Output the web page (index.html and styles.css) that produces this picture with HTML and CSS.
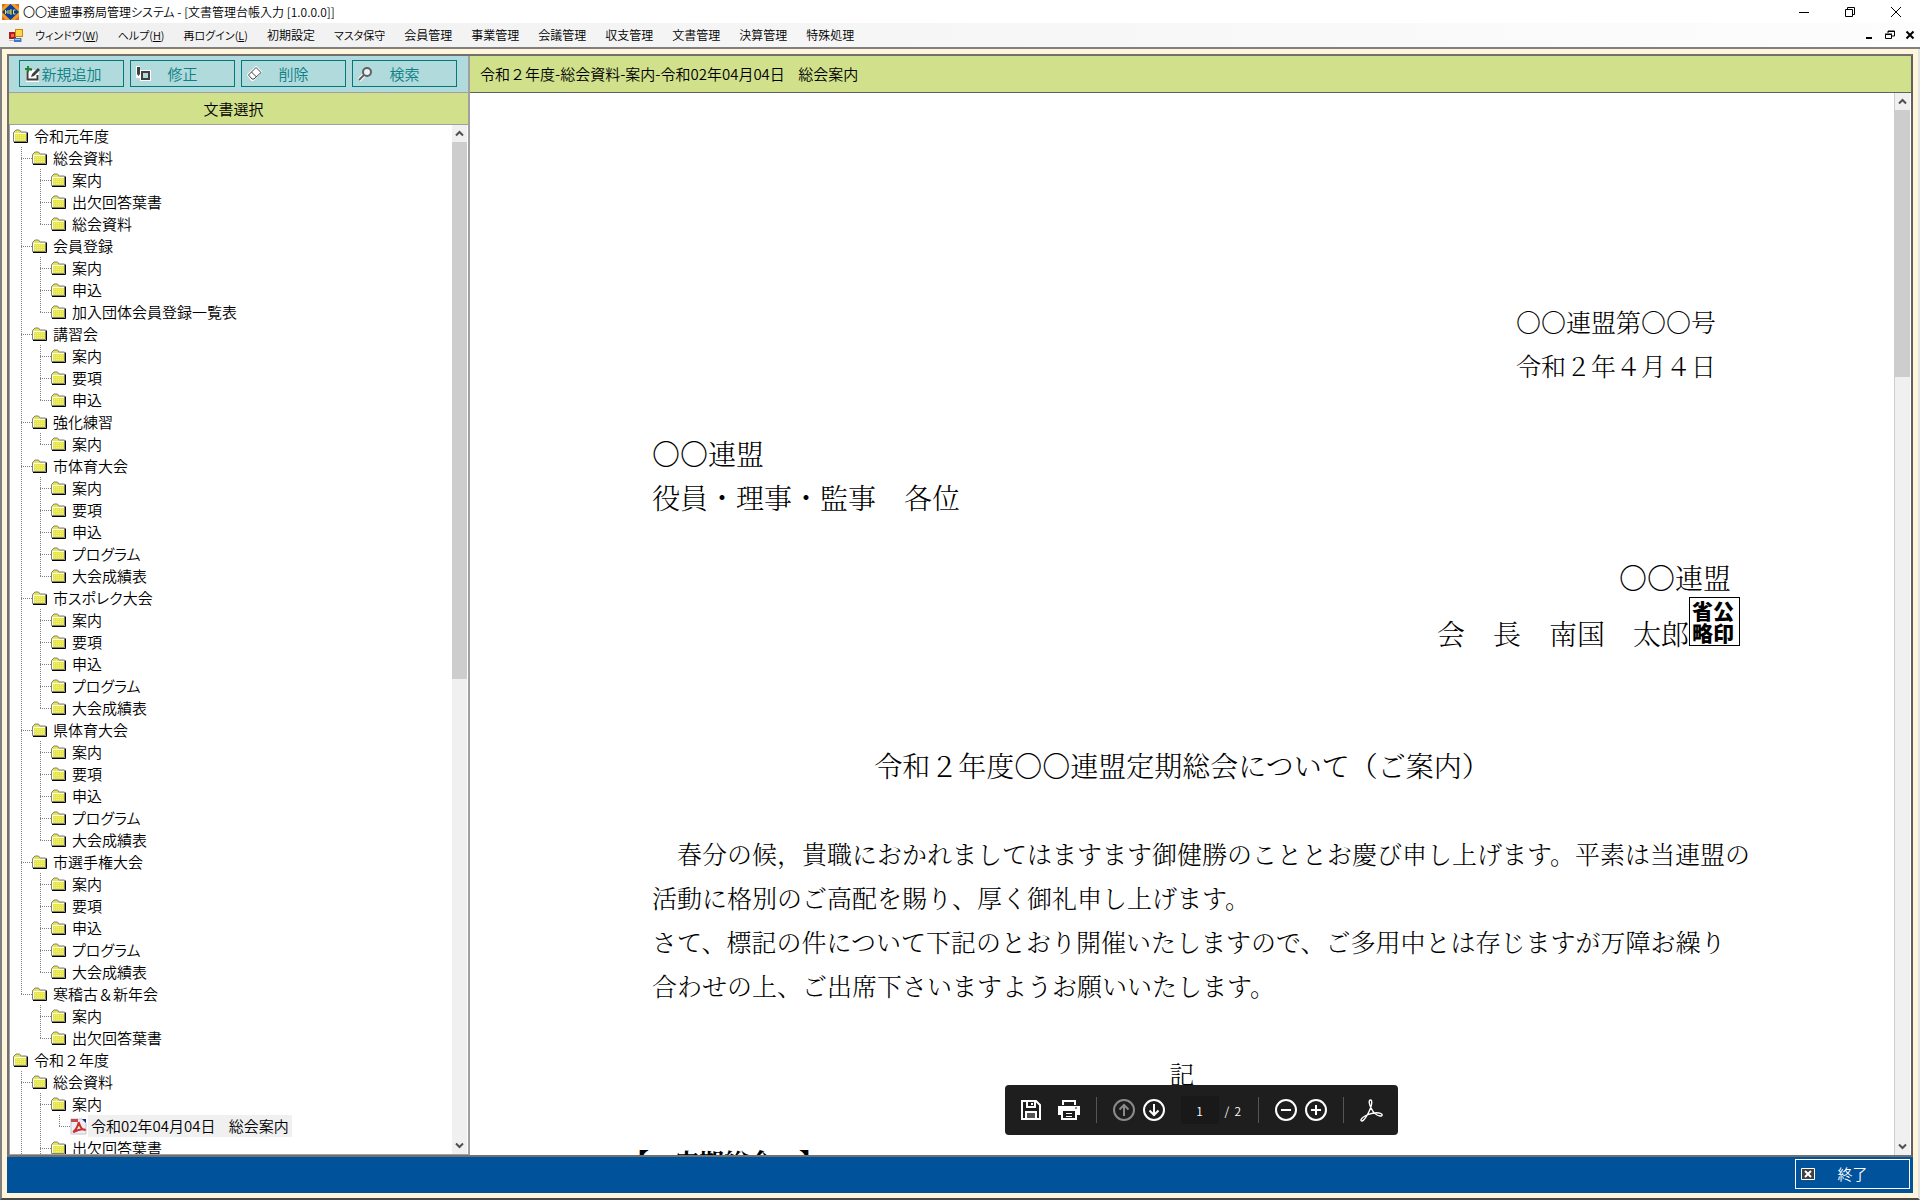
FILE: index.html
```html
<!DOCTYPE html>
<html lang="ja">
<head>
  <meta charset="UTF-8">
  <title>〇〇連盟事務局管理システム</title>
  <link rel="stylesheet" href="styles.css">
</head>
<body>

<!-- shared icons -->
<svg class="defs" aria-hidden="true">
  <symbol id="folder" viewBox="0 0 15 14">
    <path d="M0.5 12.5V3.5L2 2L3 1H6.5L8 3H13.5V12.5z" fill="#e6e645" stroke="#808080"/>
    <path d="M1.5 12V4.5H13" fill="none" stroke="#fff"/>
    <path d="M3 6.5h10M3 8.5h10M3 10.5h10" stroke="#fff" stroke-opacity=".4" stroke-dasharray="1 1"/>
    <path d="M1 13.5H14.5V3.5" fill="none" stroke="#000"/>
  </symbol>
  <symbol id="pdf" viewBox="0 0 17 17">
    <path d="M1 1h11l4 4v11H1z" fill="#eeedf4" stroke="#c5c3d4"/>
    <path d="M12 1h4v4z" fill="#1c2aa0"/>
    <path d="M1 1h7v3H1z" fill="#c84a48"/>
    <path d="M3 14c2-1 6-7 5.500-10c2 5 3 8 7 8c-4-2-8 0-12 2" fill="none" stroke="#c9302c" stroke-width="2"/>
  </symbol>
  <symbol id="up" viewBox="0 0 15 16">
    <path d="M4 10L7.500 6.500L11 10" fill="none" stroke="#505050" stroke-width="2"/>
  </symbol>
  <symbol id="down" viewBox="0 0 15 16">
    <path d="M4 6L7.500 9.500L11 6" fill="none" stroke="#505050" stroke-width="2"/>
  </symbol>
</svg>

<header class="titlebar">
  <svg class="app-icon" width="17" height="16" viewBox="0 0 17 16">
    <path d="M0 0h17v16H0z" fill="#f0a028"/>
    <path d="M0 0h4L0 4zM17 0v4L13 0zM0 16v-4l4 4zM17 16h-4l4-4z" fill="#e06b1a"/>
    <path d="M8.500 0L17 8L8.500 16L0 8z" fill="#0a3da8"/>
    <path d="M3.500 6v4M3.500 8h2M6 6v4M10 6H8v4h2M8 8h2M13.500 6h-2v4h2" fill="none" stroke="#f2e62e"/>
  </svg>
  <h1 class="kana">〇〇連盟事務局管理システム - [文書管理台帳入力 [1.0.0.0]]</h1>
  <div class="window-buttons">
    <button aria-label="最小化"><svg width="12" height="12" viewBox="0 0 12 12"><path d="M1 6.500h10" stroke="#000"/></svg></button>
    <button aria-label="元に戻す"><svg width="12" height="12" viewBox="0 0 12 12"><path d="M1.500 3.500h7v7h-7zM3.500 3V1.500h7v7H9" fill="none" stroke="#000"/></svg></button>
    <button aria-label="閉じる"><svg width="12" height="12" viewBox="0 0 12 12"><path d="M1 1l10 10M11 1L1 11" stroke="#000"/></svg></button>
  </div>
</header>

<nav class="menubar">
  <svg class="form-icon" width="14" height="15" viewBox="0 0 14 15">
    <path d="M0 4h7v7H0z" fill="#b01c1c"/><path d="M2 6h3v3H2z" fill="#e86a5a"/>
    <path d="M6 1h8v8H6z" fill="#c98a00"/><path d="M7 2h6v6H7z" fill="#ffd34a"/>
    <path d="M5 10h7v4H5z" fill="#3c78c8"/><path d="M6 11h5v1H6z" fill="#a8ccf5"/>
    <path d="M0 12.500h5M12.500 10v4" stroke="#bbb"/>
  </svg>
  <a class="kana" href="#">ウィンドウ(<u>W</u>)</a>
  <a class="kana" href="#">ヘルプ(<u>H</u>)</a>
  <a class="kana" href="#">再ログイン(<u>L</u>)</a>
  <a href="#">初期設定</a>
  <a class="kana" href="#">マスタ保守</a>
  <a href="#">会員管理</a>
  <a href="#">事業管理</a>
  <a href="#">会議管理</a>
  <a href="#">収支管理</a>
  <a href="#">文書管理</a>
  <a href="#">決算管理</a>
  <a href="#">特殊処理</a>
  <div class="mdi-buttons">
    <button aria-label="子ウィンドウを最小化"><svg width="10" height="10" viewBox="0 0 10 10"><path d="M1 8h6" stroke="#000" stroke-width="2"/></svg></button>
    <button aria-label="子ウィンドウを元に戻す"><svg width="10" height="10" viewBox="0 0 10 10"><path d="M0.500 4.500h6v4h-6zM0 4h7M3 3V1h6.500v5H7M3 1.500h6" fill="none" stroke="#000"/></svg></button>
    <button aria-label="子ウィンドウを閉じる"><svg width="10" height="10" viewBox="0 0 10 10"><path d="M1.500 1.500l7 7M8.500 1.500l-7 7" stroke="#000" stroke-width="2"/></svg></button>
  </div>
</nav>

<main class="workspace">
  <div class="frame">

    <!-- Left: toolbar and document tree -->
    <section class="sidebar">
      <div class="toolbar">
        <button class="tool">
          <svg width="16" height="16" viewBox="0 0 16 16">
            <path d="M2 5h11v10H2z" fill="#fff" stroke="#fff" stroke-width="2"/>
            <path d="M7 3.500H2.500v10h10V9" fill="none" stroke="#404040" stroke-width="2"/>
            <path d="M6 11l1-3l6-6l2 2l-6 6z" fill="#404040"/>
            <path d="M3 0v6M0 3h6" stroke="#1a8a2e" stroke-width="2"/>
          </svg>
          <span>新規追加</span>
        </button>
        <button class="tool">
          <svg width="16" height="16" viewBox="0 0 16 16">
            <path d="M0 0h4v4h11v11H4v-3H0z" fill="#fff"/>
            <path d="M6 6h7v7H6z" fill="#b0dadc" stroke="#404040" stroke-width="2"/>
            <path d="M1 1h3v7l-1.500 2L1 8zM0 3h1" fill="#404040"/>
          </svg>
          <span>修正</span>
        </button>
        <button class="tool">
          <svg width="16" height="16" viewBox="0 0 16 16">
            <path d="M1 9l8-8l5 5l-8 8H5z" fill="#fff" stroke="#fff" stroke-width="2"/>
            <path d="M1.500 9L9 1.500l5 5L7 13H5zM4.500 6l5 5" fill="#fff" stroke="#404040"/>
          </svg>
          <span>削除</span>
        </button>
        <button class="tool">
          <svg width="16" height="16" viewBox="0 0 16 16">
            <path d="M1 14l6-6" stroke="#fff" stroke-width="4"/>
            <circle cx="9" cy="6" r="4" fill="#e8f4f5" stroke="#606060" stroke-width="2"/>
            <path d="M6 9l-5 5" stroke="#606060" stroke-width="2"/>
          </svg>
          <span>検索</span>
        </button>
      </div>
      <h2 class="side-title">文書選択</h2>
      <div class="tree-box">
        <ul class="tree">
          <li><span class="row"><svg><use href="#folder"/></svg><span>令和元年度</span></span>
            <ul>
              <li><span class="row"><svg><use href="#folder"/></svg><span>総会資料</span></span>
                <ul>
                  <li><span class="row"><svg><use href="#folder"/></svg><span>案内</span></span></li>
                  <li><span class="row"><svg><use href="#folder"/></svg><span>出欠回答葉書</span></span></li>
                  <li><span class="row"><svg><use href="#folder"/></svg><span>総会資料</span></span></li>
                </ul>
              </li>
              <li><span class="row"><svg><use href="#folder"/></svg><span>会員登録</span></span>
                <ul>
                  <li><span class="row"><svg><use href="#folder"/></svg><span>案内</span></span></li>
                  <li><span class="row"><svg><use href="#folder"/></svg><span>申込</span></span></li>
                  <li><span class="row"><svg><use href="#folder"/></svg><span>加入団体会員登録一覧表</span></span></li>
                </ul>
              </li>
              <li><span class="row"><svg><use href="#folder"/></svg><span>講習会</span></span>
                <ul>
                  <li><span class="row"><svg><use href="#folder"/></svg><span>案内</span></span></li>
                  <li><span class="row"><svg><use href="#folder"/></svg><span>要項</span></span></li>
                  <li><span class="row"><svg><use href="#folder"/></svg><span>申込</span></span></li>
                </ul>
              </li>
              <li><span class="row"><svg><use href="#folder"/></svg><span>強化練習</span></span>
                <ul>
                  <li><span class="row"><svg><use href="#folder"/></svg><span>案内</span></span></li>
                </ul>
              </li>
              <li><span class="row"><svg><use href="#folder"/></svg><span>市体育大会</span></span>
                <ul>
                  <li><span class="row"><svg><use href="#folder"/></svg><span>案内</span></span></li>
                  <li><span class="row"><svg><use href="#folder"/></svg><span>要項</span></span></li>
                  <li><span class="row"><svg><use href="#folder"/></svg><span>申込</span></span></li>
                  <li><span class="row"><svg><use href="#folder"/></svg><span class="kana">プログラム</span></span></li>
                  <li><span class="row"><svg><use href="#folder"/></svg><span>大会成績表</span></span></li>
                </ul>
              </li>
              <li><span class="row"><svg><use href="#folder"/></svg><span class="kana">市スポレク大会</span></span>
                <ul>
                  <li><span class="row"><svg><use href="#folder"/></svg><span>案内</span></span></li>
                  <li><span class="row"><svg><use href="#folder"/></svg><span>要項</span></span></li>
                  <li><span class="row"><svg><use href="#folder"/></svg><span>申込</span></span></li>
                  <li><span class="row"><svg><use href="#folder"/></svg><span class="kana">プログラム</span></span></li>
                  <li><span class="row"><svg><use href="#folder"/></svg><span>大会成績表</span></span></li>
                </ul>
              </li>
              <li><span class="row"><svg><use href="#folder"/></svg><span>県体育大会</span></span>
                <ul>
                  <li><span class="row"><svg><use href="#folder"/></svg><span>案内</span></span></li>
                  <li><span class="row"><svg><use href="#folder"/></svg><span>要項</span></span></li>
                  <li><span class="row"><svg><use href="#folder"/></svg><span>申込</span></span></li>
                  <li><span class="row"><svg><use href="#folder"/></svg><span class="kana">プログラム</span></span></li>
                  <li><span class="row"><svg><use href="#folder"/></svg><span>大会成績表</span></span></li>
                </ul>
              </li>
              <li><span class="row"><svg><use href="#folder"/></svg><span>市選手権大会</span></span>
                <ul>
                  <li><span class="row"><svg><use href="#folder"/></svg><span>案内</span></span></li>
                  <li><span class="row"><svg><use href="#folder"/></svg><span>要項</span></span></li>
                  <li><span class="row"><svg><use href="#folder"/></svg><span>申込</span></span></li>
                  <li><span class="row"><svg><use href="#folder"/></svg><span class="kana">プログラム</span></span></li>
                  <li><span class="row"><svg><use href="#folder"/></svg><span>大会成績表</span></span></li>
                </ul>
              </li>
              <li><span class="row"><svg><use href="#folder"/></svg><span>寒稽古＆新年会</span></span>
                <ul>
                  <li><span class="row"><svg><use href="#folder"/></svg><span>案内</span></span></li>
                  <li><span class="row"><svg><use href="#folder"/></svg><span>出欠回答葉書</span></span></li>
                </ul>
              </li>
            </ul>
          </li>
          <li><span class="row"><svg><use href="#folder"/></svg><span>令和２年度</span></span>
            <ul>
              <li class="more"><span class="row"><svg><use href="#folder"/></svg><span>総会資料</span></span>
                <ul>
                  <li><span class="row"><svg><use href="#folder"/></svg><span>案内</span></span>
                    <ul>
                      <li><span class="row selected"><svg class="pdf"><use href="#pdf"/></svg><span>令和02年04月04日&nbsp;&nbsp;&nbsp; 総会案内</span></span></li>
                    </ul>
                  </li>
                  <li class="more"><span class="row"><svg><use href="#folder"/></svg><span>出欠回答葉書</span></span></li>
                </ul>
              </li>
            </ul>
          </li>
        </ul>
        <div class="scrollbar">
          <svg><use href="#up"/></svg>
          <div class="track"><div class="thumb tree-thumb"></div></div>
          <svg><use href="#down"/></svg>
        </div>
      </div>
    </section>

    <!-- Right: PDF preview -->
    <section class="viewer">
      <h2 class="doc-path">令和２年度-総会資料-案内-令和02年04月04日&nbsp;&nbsp;&nbsp; 総会案内</h2>
      <div class="doc-pane">
        <div class="doc-scroll">
          <article class="page">
            <p class="number">〇〇連盟第〇〇号<br>令和２年４月４日</p>
            <p class="address">〇〇連盟<br>役員・理事・監事　各位</p>
            <p class="sender">〇〇連盟</p>
            <p class="chairman">会　長　南国　太郎<span class="seal">省公<br>略印</span></p>
            <h3>令和２年度〇〇連盟定期総会について（ご案内）</h3>
            <p class="body-text">　春分の候，貴職におかれましてはますます御健勝のこととお慶び申し上げます。平素は当連盟の<br>活動に格別のご高配を賜り、厚く御礼申し上げます。<br>さて、標記の件について下記のとおり開催いたしますので、ご多用中とは存じますが万障お繰り<br>合わせの上、ご出席下さいますようお願いいたします。</p>
            <p class="ki">記</p>
            <p class="section">【　定期総会　】</p>
          </article>
        </div>
        <div class="scrollbar doc-bar">
          <svg><use href="#up"/></svg>
          <div class="track"><div class="thumb doc-thumb"></div></div>
          <svg><use href="#down"/></svg>
        </div>

        <div class="pdf-tools">
          <button aria-label="保存">
            <svg width="22" height="22" viewBox="0 0 22 22" fill="none" stroke="#fff" stroke-width="2">
              <path d="M2 2h14l4 4v14H2z"/><path d="M7 2v6h8V2M12 4v2"/><path d="M6 20v-7h10v7z" fill="#555"/>
            </svg>
          </button>
          <button aria-label="印刷">
            <svg width="22" height="22" viewBox="0 0 22 22">
              <path d="M4 1h14v5H4zM0 7h22v9h-3v5H3v-5H0z" fill="#fff"/>
              <path d="M6 3h10v3H6zM5 12h12v7H5z" fill="#1e1e1e"/>
              <path d="M8 14.500h6M8 17.500h6" stroke="#fff"/><path d="M17 9h2" stroke="#1e1e1e"/>
            </svg>
          </button>
          <i class="sep"></i>
          <button aria-label="前のページ" disabled>
            <svg width="22" height="22" viewBox="0 0 22 22" fill="none" stroke="#8a8a8a" stroke-width="2">
              <circle cx="11" cy="11" r="10"/><path d="M11 17V6M6.500 10.500L11 6l4.500 4.500"/>
            </svg>
          </button>
          <button class="near" aria-label="次のページ">
            <svg width="22" height="22" viewBox="0 0 22 22" fill="none" stroke="#fff" stroke-width="2">
              <circle cx="11" cy="11" r="10"/><path d="M11 5v11M6.500 11.500L11 16l4.500-4.500"/>
            </svg>
          </button>
          <input type="text" value="1" aria-label="ページ番号">
          <span class="total">/&nbsp; 2</span>
          <i class="sep"></i>
          <button aria-label="縮小">
            <svg width="22" height="22" viewBox="0 0 22 22" fill="none" stroke="#fff" stroke-width="2">
              <circle cx="11" cy="11" r="10"/><path d="M6 11h10"/>
            </svg>
          </button>
          <button class="near" aria-label="拡大">
            <svg width="22" height="22" viewBox="0 0 22 22" fill="none" stroke="#fff" stroke-width="2">
              <circle cx="11" cy="11" r="10"/><path d="M6 11h10M11 6v10"/>
            </svg>
          </button>
          <i class="sep"></i>
          <button aria-label="Acrobat">
            <svg width="23" height="23" viewBox="0 0 23 23" fill="none" stroke="#fff" stroke-width="1.400">
              <path d="M10.500 1C8.500 1 9 5 11 9c2 4 5.500 7.500 9 8c2.800.3 2.800-2 .5-2.700C16 13 9 14.500 5 17c-3.500 2-4.700 4-3.700 4.800C2.500 22.700 5 20 7.500 15.500C10 11 11.500 7.500 11.700 4C11.800 2.200 11.500 1 10.500 1z"/>
            </svg>
          </button>
        </div>
      </div>
    </section>
  </div>

  <footer class="footer">
    <button class="tool exit">
      <svg width="14" height="12" viewBox="0 0 14 12">
        <path d="M0.500 0.500h13v11h-13z" fill="#404040" stroke="#fff"/>
        <path d="M4 3l6 6M10 3l-6 6" stroke="#fff" stroke-width="2"/>
      </svg>
      <span>終了</span>
    </button>
  </footer>
</main>

</body>
</html>
```

FILE: styles.css
```css
* {
  box-sizing: border-box;
}
body {
  margin: 0;
  height: 100vh;
  display: flex;
  flex-direction: column;
  overflow: hidden;
  font-family: "Noto Sans CJK JP", sans-serif;
  font-size: 15px;
  font-weight: 350;
  color: #000;
  background: #fff;
}
h1, h2, h3, p, ul {
  margin: 0;
  padding: 0;
  font-weight: inherit;
}
button {
  padding: 0;
  border: 0;
  background: none;
  font: inherit;
  color: inherit;
}
svg {
  display: block;
}
.defs {
  display: none;
}

/* proportional kana in labels */
.kana {
  font-feature-settings: "palt";
}

/* window chrome */
.titlebar {
  flex: none;
  display: flex;
  align-items: center;
  height: 23px;
  padding: 0 18px 0 2px;
}
.titlebar h1 {
  margin-left: 4px;
  font-size: 12px;
  line-height: 23px;
}
.window-buttons {
  display: flex;
  gap: 34px;
  margin-left: auto;
}
.menubar {
  flex: none;
  display: flex;
  align-items: center;
  gap: 19px;
  height: 26px;
  padding: 0 5px 0 9px;
  font-size: 12px;
  line-height: 24px;
  background: linear-gradient(90deg, #f0f0f0, #fdfdfd);
  border-bottom: 2px solid #808080;
}
.menubar a {
  color: inherit;
  text-decoration: none;
}
.menubar .kana {
  font-size: 11px;
}
.form-icon {
  margin-right: -7px;
}
.mdi-buttons {
  display: flex;
  gap: 10px;
  margin-left: auto;
}

/* work area */
.workspace {
  flex: 1;
  min-height: 0;
  display: flex;
  flex-direction: column;
  padding: 5px;
  background: #fff5da;
  border: solid #808080;
  border-width: 0 2px 2px;
  border-right-color: #e3e3e3;
  border-bottom-color: #484848;
}
.frame {
  flex: 1;
  min-height: 0;
  display: flex;
  background: #fff;
  border: 2px solid #707070;
  border-right-color: #606060;
}
.sidebar {
  flex: 0 0 461px;
  display: flex;
  flex-direction: column;
  border-right: 2px solid #a0a0a0;
}
.toolbar {
  display: flex;
  gap: 6px;
  padding: 4px 11px 5px 10px;
  background: #b0dadc;
  border-bottom: 1px solid #a0a0a0;
}
.tool {
  flex: 1;
  display: grid;
  align-items: center;
  height: 27px;
  line-height: 24px;
  color: #0b8085;
  border: 1px solid #00787c;
}
.tool svg, .tool span {
  grid-area: 1 / 1;
}
.tool svg {
  margin-left: 5px;
}
.side-title {
  padding-right: 10px;
  text-align: center;
  font-size: 15px;
  line-height: 31px;
  background: #d1e08b;
  border-bottom: 1px solid #a0a0a0;
}

/* document tree */
.tree-box {
  flex: 1;
  min-height: 0;
  display: flex;
  border: solid #a0a0a0;
  border-width: 0 0 1px 1px;
}
.tree {
  flex: 1;
  overflow: hidden;
  padding-left: 3px;
}
.tree ul {
  margin-left: 8px;
}
.tree li {
  list-style: none;
}
.tree li li {
  padding-left: 11px;
  background:
    repeating-linear-gradient(#808080 0 1px, transparent 1px 2px) 0 0 / 1px 100% no-repeat,
    repeating-linear-gradient(90deg, #808080 0 1px, transparent 1px 2px) 0 11px / 11px 1px no-repeat;
}
.tree li li:last-child:not(.more) {
  background-size: 1px 12px, 11px 1px;
}
.row {
  display: flex;
  align-items: center;
  height: 22px;
  line-height: 22px;
}
.row svg {
  width: 15px;
  height: 14px;
  margin-right: 3px;
}
.row .pdf {
  width: 17px;
  height: 17px;
  margin-right: 1px;
}
.row span {
  padding: 0 3px;
}
.selected span {
  background: #f0f0f0;
}

/* scrollbars */
.scrollbar {
  flex: 0 0 15px;
  display: flex;
  flex-direction: column;
  margin-right: 1px;
  background: #f0f0f0;
}
.scrollbar svg {
  width: 15px;
  height: 17px;
}
.track {
  flex: 1;
}
.thumb {
  background: #cdcdcd;
}
.tree-thumb {
  height: 54%;
}
.doc-thumb {
  height: 26%;
}

/* preview */
.viewer {
  flex: 1;
  min-width: 0;
  display: flex;
  flex-direction: column;
}
.doc-path {
  padding-left: 10px;
  font-size: 15px;
  line-height: 36px;
  background: #d1e08b;
  border-bottom: 1px solid #606060;
}
.doc-pane {
  flex: 1;
  min-height: 0;
  display: flex;
  position: relative;
}
.doc-scroll {
  flex: 1;
  overflow: hidden;
  border-right: 1px solid #cdcdcd;
}
.page {
  width: 1116px;
  margin: 0 auto;
  padding-top: 206px;
  font-family: "MS Mincho", "Noto Serif CJK JP", "Noto Sans CJK JP", serif;
  font-size: 28px;
  font-weight: 300;
  line-height: 44px;
  white-space: nowrap;
}
.number {
  padding-right: 24px;
  text-align: right;
  font-size: 25px;
}
.address {
  margin-top: 44px;
  padding-left: 28px;
}
.sender {
  margin-top: 36px;
  padding-right: 9px;
  text-align: right;
}
.chairman {
  position: relative;
  margin-top: 12px;
  padding-right: 51px;
  text-align: right;
}
.seal {
  position: absolute;
  right: 0;
  top: -14px;
  width: 51px;
  height: 49px;
  padding: 1px 0 0 2px;
  border: 1px solid #000;
  text-align: left;
  font-family: "Noto Sans CJK JP", sans-serif;
  font-size: 21px;
  font-weight: 900;
  line-height: 22px;
}
.page h3 {
  margin-top: 88px;
  text-align: center;
  font-size: 28px;
}
.body-text {
  margin-top: 44px;
  padding-left: 28px;
  font-size: 25px;
}
.ki {
  margin-top: 44px;
  text-align: center;
  font-size: 25px;
}
.section {
  margin-top: 44px;
  font-size: 25px;
  font-weight: 700;
}

/* floating PDF controls */
.pdf-tools {
  position: absolute;
  left: 50%;
  bottom: 20px;
  display: flex;
  align-items: center;
  gap: 16px;
  height: 50px;
  margin-left: -186px;
  padding: 0 15px;
  border-radius: 4px;
  background: #1e1e1e;
  color: #fff;
  font-size: 12px;
}
.pdf-tools .near {
  margin-left: -8px;
}
.pdf-tools input {
  width: 38px;
  height: 28px;
  padding: 0;
  border: 0;
  text-align: center;
  font: inherit;
  color: #fff;
  background: #191919;
}
.total {
  width: 17px;
  margin-left: -10px;
  white-space: nowrap;
}
.sep {
  width: 1px;
  height: 26px;
  background: #555;
}

.footer {
  flex: none;
  display: flex;
  justify-content: flex-end;
  height: 36px;
  padding: 2px 3px 4px;
  background: #00529b;
}
.exit {
  flex: 0 0 115px;
  height: 30px;
  color: #fff;
  border-color: #fff;
}
```
